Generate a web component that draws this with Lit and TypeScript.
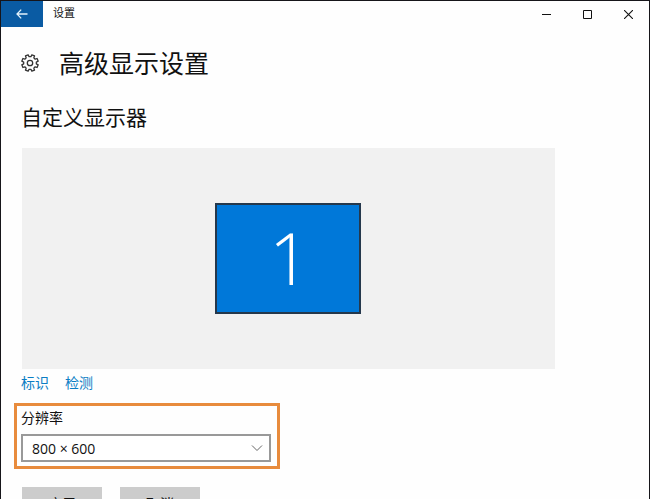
import { LitElement, html, css } from "lit";
import { customElement, property, state } from "lit/decorators.js";

const RESOLUTIONS = ["800 × 600", "1024 × 768", "1280 × 720", "1920 × 1080"];

@customElement("title-bar")
export class TitleBar extends LitElement {
  @property() heading = "";

  static styles = css`
    :host {
      display: flex;
      align-items: stretch;
      height: 26px;
      flex: none;
    }
    button {
      display: grid;
      place-items: center;
      width: 41px;
      padding: 0;
      border: 0;
      background: none;
      color: #111;
    }
    svg {
      display: block;
      fill: none;
      stroke: currentColor;
    }
    .back {
      width: 42px;
      background: #0a5ba3;
      color: #e4f2fb;
    }
    .title {
      flex: 1;
      padding-left: 10px;
      font-size: 11px;
      line-height: 24px;
    }
    .controls {
      display: flex;
    }
  `;

  render() {
    return html`
      <button class="back" aria-label="返回">
        <svg width="12" height="10" viewBox="0 0 12 10" stroke-width="1.3">
          <path d="M5.2 .6L1 5l4.2 4.4M1 5h10.5" />
        </svg>
      </button>
      <span class="title">${this.heading}</span>
      <div class="controls">
        <button aria-label="最小化">
          <svg width="9" height="9" viewBox="0 0 9 9"><path d="M0 4.5h9" /></svg>
        </button>
        <button aria-label="最大化">
          <svg width="9" height="9" viewBox="0 0 9 9"><path d="M.5 .5h8v8h-8z" /></svg>
        </button>
        <button aria-label="关闭">
          <svg width="9" height="9" viewBox="0 0 9 9" stroke-width="1.1"><path d="M0 0l9 9M9 0L0 9" /></svg>
        </button>
      </div>
    `;
  }
}

@customElement("gear-icon")
export class GearIcon extends LitElement {
  static styles = css`
    :host {
      display: block;
      flex: none;
    }
    svg {
      display: block;
      fill: none;
      stroke: #333;
      stroke-width: 1.3;
      stroke-linejoin: round;
    }
  `;

  // Outline of an eight-toothed wheel, one tooth every 45 degrees.
  private get outline() {
    const points: string[] = [];
    for (let tooth = 0; tooth < 8; tooth++) {
      const middle = tooth * 45 + 22.5;
      for (const [offset, radius] of [[-14, 6.4], [-10, 8.4], [10, 8.4], [14, 6.4]]) {
        const angle = ((middle + offset) * Math.PI) / 180;
        points.push(`${(9 + radius * Math.cos(angle)).toFixed(2)},${(9 + radius * Math.sin(angle)).toFixed(2)}`);
      }
    }
    return points.join(" ");
  }

  render() {
    return html`
      <svg width="18" height="18" viewBox="0 0 18 18" aria-hidden="true">
        <polygon points=${this.outline} />
        <circle cx="9" cy="9" r="2.7" />
      </svg>
    `;
  }
}

@customElement("app-root")
export class AppRoot extends LitElement {
  @state() private resolution = RESOLUTIONS[0];

  static styles = css`
    :host {
      display: flex;
      flex-direction: column;
      box-sizing: border-box;
      height: 100vh;
      border: 1px solid #16151a;
      border-bottom: 0;
      background: #fefefe;
      color: #111;
      font-family: "Open Sans", "Noto Sans CJK SC", sans-serif;
      font-size: 14px;
    }
    main {
      flex: 1;
      min-height: 0;
      overflow: auto;
      scrollbar-width: none;
      padding: 16px 94px 24px 20px;
    }
    h1,
    h2 {
      margin: 0;
      font-weight: 400;
    }
    h1 {
      font-size: 25px;
      line-height: 40px;
    }
    h2 {
      margin-top: 18px;
      font-size: 21px;
      line-height: 32px;
    }
    .header {
      display: flex;
      align-items: center;
      gap: 20px;
    }
    .preview {
      display: grid;
      place-items: center;
      height: 221px;
      margin: 15px 0 0 1px;
      background: #f1f1f1;
    }
    .display {
      box-sizing: border-box;
      width: 146px;
      height: 111px;
      margin-right: 2px;
      padding: 0 0 4px 4px;
      border: 2px solid #25384c;
      background: #0078d9;
      color: #fff;
      font-family: "Open Sans", sans-serif;
      font-size: 72px;
      font-weight: 300;
      line-height: 100px;
    }
    .links {
      display: flex;
      gap: 16px;
      margin-top: 4px;
      line-height: 20px;
    }
    a {
      color: #0a7dc4;
      text-decoration: none;
    }
    .resolution {
      box-sizing: border-box;
      width: 266px;
      margin: 10px 0 0 -7px;
      padding: 2px 6px 4px 4px;
      border: 3px solid #e88b3c;
    }
    label {
      display: block;
      line-height: 20px;
    }
    .field {
      display: grid;
      align-items: center;
      margin-top: 6px;
    }
    .field > * {
      grid-area: 1 / 1;
    }
    select {
      appearance: none;
      box-sizing: border-box;
      width: 100%;
      height: 28px;
      padding: 0 32px 0 9px;
      border: 2px solid #999;
      border-radius: 0;
      background: #fff;
      color: #111;
      font: inherit;
    }
    .chevron {
      justify-self: end;
      margin-right: 8px;
      fill: none;
      stroke: #666;
      pointer-events: none;
    }
    .actions {
      display: flex;
      gap: 18px;
      margin: 18px 0 0 1px;
    }
    .actions button {
      width: 80px;
      height: 32px;
      padding: 0;
      border: 0;
      background: #ccc;
      color: #111;
      font: inherit;
    }
  `;

  private pick(event: Event) {
    this.resolution = (event.target as HTMLSelectElement).value;
  }

  render() {
    return html`
      <title-bar heading="设置"></title-bar>
      <main>
        <div class="header">
          <gear-icon></gear-icon>
          <h1>高级显示设置</h1>
        </div>
        <h2>自定义显示器</h2>
        <div class="preview">
          <button class="display">1</button>
        </div>
        <nav class="links">
          <a href="#identify">标识</a>
          <a href="#detect">检测</a>
        </nav>
        <div class="resolution">
          <label for="resolution">分辨率</label>
          <div class="field">
            <select id="resolution" .value=${this.resolution} @change=${this.pick}>
              ${RESOLUTIONS.map((name) => html`<option>${name}</option>`)}
            </select>
            <svg class="chevron" width="12" height="8" viewBox="0 0 12 8" aria-hidden="true">
              <path d="M1 1.5l5 5 5-5" />
            </svg>
          </div>
        </div>
        <div class="actions">
          <button>应用</button>
          <button>取消</button>
        </div>
      </main>
    `;
  }
}
